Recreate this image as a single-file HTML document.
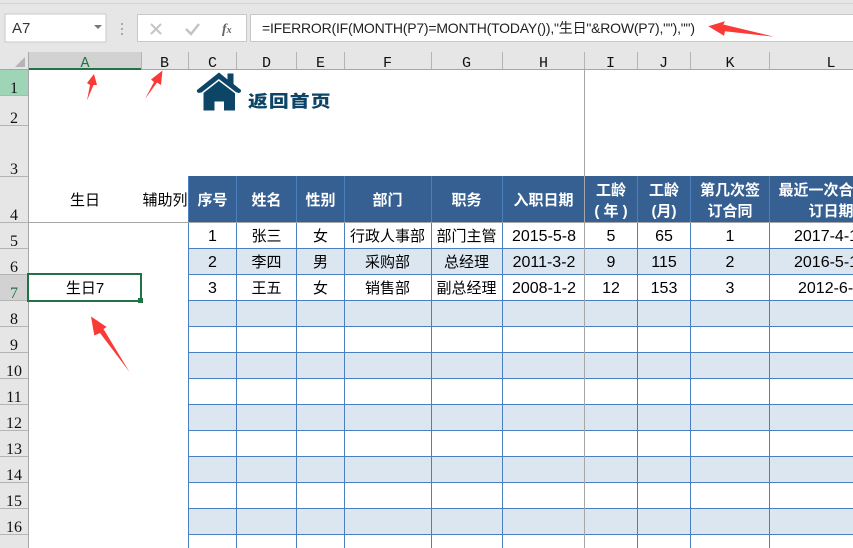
<!DOCTYPE html>
<html lang="zh"><head><meta charset="utf-8"><title>Excel</title>
<style>
html,body{margin:0;padding:0;background:#fff;width:853px;height:548px;overflow:hidden}
svg{display:block;position:absolute;left:0;top:0}
rect{shape-rendering:crispEdges}
.m{font-family:"Liberation Mono",monospace;font-size:15px;fill:#111;text-anchor:middle}
.r{font-family:"Liberation Serif",serif;font-size:16px;fill:#111;text-anchor:middle}
.d{font-family:"Liberation Sans","Noto Sans CJK SC",sans-serif;font-size:15px;fill:#000;text-anchor:middle}
.n{font-family:"Liberation Sans",sans-serif;font-size:16px;fill:#000;text-anchor:middle}
.h{font-family:"Liberation Sans","Noto Sans CJK SC",sans-serif;font-size:15px;font-weight:700;fill:#fff;text-anchor:middle}
</style></head><body>
<svg width="853" height="548" viewBox="0 0 853 548" xmlns="http://www.w3.org/2000/svg">
<rect width="853" height="548" fill="#fff"/>
<!-- ribbon / formula bar -->
<rect width="853" height="52" fill="#e6e6e6"/>
<rect y="3" width="853" height="1" fill="#d4d4d4"/>
<rect x="5" y="14" width="101" height="28" fill="#fff" stroke="#c8c8c8"/>
<text x="12" y="33" font-family="Liberation Sans,sans-serif" font-size="15" fill="#333">A7</text>
<path d="M94 25h8l-4 4z" fill="#777"/>
<rect x="121" y="23" width="2" height="2" fill="#aaa"/><rect x="121" y="28" width="2" height="2" fill="#aaa"/><rect x="121" y="33" width="2" height="2" fill="#aaa"/>
<rect x="137.500" y="14.500" width="109" height="27" fill="#fff" stroke="#c8c8c8"/>
<path d="M151 24l10 10M161 24l-10 10" stroke="#c4c4c4" stroke-width="2" fill="none"/>
<path d="M186 29l5 5 8-10" stroke="#c4c4c4" stroke-width="2.500" fill="none"/>
<text x="222" y="33" font-family="Liberation Serif,serif" font-style="italic" font-weight="700" font-size="14" fill="#666">f<tspan font-size="10">x</tspan></text>
<rect x="250.500" y="14.500" width="610" height="27" fill="#fff" stroke="#c8c8c8"/>
<text x="262" y="33" font-family="Liberation Sans,'Noto Sans CJK SC',sans-serif" font-size="14" fill="#222" textLength="433" lengthAdjust="spacing">=IFERROR(IF(MONTH(P7)=MONTH(TODAY()),"生日"&amp;ROW(P7),""),"")</text>

<!-- column headers -->
<rect y="52" width="853" height="17" fill="#e6e6e6"/>
<rect x="29" y="52" width="112" height="17" fill="#d2d2d2"/>
<rect y="69" width="853" height="1" fill="#a6a6a6"/>
<rect x="29" y="68" width="112" height="2" fill="#217346"/>
<path d="M25 57v10H15z" fill="#b4b4b4"/>
<g fill="#b4b4b4">
<rect x="141" y="52" width="1" height="17"/><rect x="188" y="52" width="1" height="17"/><rect x="236" y="52" width="1" height="17"/><rect x="296" y="52" width="1" height="17"/><rect x="344" y="52" width="1" height="17"/><rect x="431" y="52" width="1" height="17"/><rect x="502" y="52" width="1" height="17"/><rect x="584" y="52" width="1" height="17"/><rect x="637" y="52" width="1" height="17"/><rect x="690" y="52" width="1" height="17"/><rect x="769" y="52" width="1" height="17"/>
</g>
<text class="m" x="85" y="67" style="fill:#217346">A</text><text class="m" x="164.500" y="67">B</text><text class="m" x="212.500" y="67">C</text><text class="m" x="266.500" y="67">D</text><text class="m" x="320.500" y="67">E</text><text class="m" x="387.500" y="67">F</text><text class="m" x="466.500" y="67">G</text><text class="m" x="543.500" y="67">H</text><text class="m" x="610.500" y="67">I</text><text class="m" x="663.500" y="67">J</text><text class="m" x="730" y="67">K</text><text class="m" x="831" y="67">L</text>

<!-- row headers -->
<rect y="70" width="28" height="478" fill="#e6e6e6"/>
<rect y="70" width="28" height="26" fill="#9fd5b7"/>
<rect y="274" width="28" height="26" fill="#d2d2d2"/>
<rect x="28" y="52" width="1" height="496" fill="#a6a6a6"/>
<g fill="#b4b4b4">
<rect y="95" width="28" height="1"/><rect y="125" width="28" height="1"/><rect y="176" width="28" height="1"/><rect y="222" width="28" height="1"/><rect y="248" width="28" height="1"/><rect y="274" width="28" height="1"/><rect y="300" width="28" height="1"/><rect y="326" width="28" height="1"/><rect y="352" width="28" height="1"/><rect y="378" width="28" height="1"/><rect y="404" width="28" height="1"/><rect y="430" width="28" height="1"/><rect y="456" width="28" height="1"/><rect y="482" width="28" height="1"/><rect y="508" width="28" height="1"/><rect y="534" width="28" height="1"/>
</g>
<text class="r" x="14" y="93">1</text><text class="r" x="14" y="123">2</text><text class="r" x="14" y="174">3</text><text class="r" x="14" y="220">4</text><text class="r" x="14" y="246">5</text><text class="r" x="14" y="272">6</text><text class="r" x="14" y="298" style="fill:#217346">7</text><text class="r" x="14" y="324">8</text><text class="r" x="14" y="350">9</text><text class="r" x="14" y="376">10</text><text class="r" x="14" y="402">11</text><text class="r" x="14" y="428">12</text><text class="r" x="14" y="454">13</text><text class="r" x="14" y="480">14</text><text class="r" x="14" y="506">15</text><text class="r" x="14" y="532">16</text>

<!-- table fills -->
<rect x="188" y="176" width="665" height="46" fill="#366092"/>
<g fill="#dce6f1">
<rect x="188" y="248" width="665" height="26"/><rect x="188" y="300" width="665" height="26"/><rect x="188" y="352" width="665" height="26"/><rect x="188" y="404" width="665" height="26"/><rect x="188" y="456" width="665" height="26"/><rect x="188" y="508" width="665" height="26"/>
</g>
<!-- table grid -->
<g fill="#4a7fc1">
<rect x="188" y="176" width="1" height="372"/><rect x="236" y="176" width="1" height="372"/><rect x="296" y="176" width="1" height="372"/><rect x="344" y="176" width="1" height="372"/><rect x="431" y="176" width="1" height="372"/><rect x="502" y="176" width="1" height="372"/><rect x="637" y="176" width="1" height="372"/><rect x="690" y="176" width="1" height="372"/><rect x="769" y="176" width="1" height="372"/>
<rect x="188" y="248" width="665" height="1"/><rect x="188" y="274" width="665" height="1"/><rect x="188" y="300" width="665" height="1"/><rect x="188" y="326" width="665" height="1"/><rect x="188" y="352" width="665" height="1"/><rect x="188" y="378" width="665" height="1"/><rect x="188" y="404" width="665" height="1"/><rect x="188" y="430" width="665" height="1"/><rect x="188" y="456" width="665" height="1"/><rect x="188" y="482" width="665" height="1"/><rect x="188" y="508" width="665" height="1"/><rect x="188" y="534" width="665" height="1"/>
</g>
<!-- freeze panes -->
<rect x="29" y="222" width="824" height="1" fill="#a6a6a6"/>
<rect x="584" y="70" width="1" height="478" fill="#a6a6a6"/>

<!-- logo -->
<path d="M219 72.500L227.500 79.500V73.500H233.500V84L241 90Q241.500 92 239 93L235 92V110.500H224V101.500H214.500V110.500H203.500V92L199 93Q196 92 197 90Z" fill="#0d4567"/>
<path d="M201.500 93.500L218.800 80L236.500 93.500" fill="none" stroke="#fff" stroke-width="1.500"/>
<text transform="translate(248,107) scale(1.1,0.92)" font-family="Noto Sans CJK SC,sans-serif" font-weight="900" font-size="18" letter-spacing="1" fill="#0d4567">返回首页</text>

<!-- left labels -->
<text class="d" x="85" y="205">生日</text>
<text class="d" x="165" y="205">辅助列</text>
<text class="d" x="85" y="293">生日7</text>
<rect x="28" y="274" width="113" height="27" fill="none" stroke="#217346" stroke-width="2"/>
<rect x="138" y="298" width="6" height="6" fill="#fff"/>
<rect x="138" y="298" width="5" height="5" fill="#217346"/>

<!-- table header -->
<text class="h" x="212.500" y="205">序号</text><text class="h" x="266.500" y="205">姓名</text><text class="h" x="320.500" y="205">性别</text><text class="h" x="387.500" y="205">部门</text><text class="h" x="466.500" y="205">职务</text><text class="h" x="543.500" y="205">入职日期</text>
<text class="h" x="611" y="195">工龄</text><text class="h" x="611" y="216">( 年 )</text>
<text class="h" x="664" y="195">工龄</text><text class="h" x="664" y="216">(月)</text>
<text class="h" x="730" y="195">第几次签</text><text class="h" x="730" y="216">订合同</text>
<text class="h" x="831" y="195">最近一次合同签</text><text class="h" x="831" y="216">订日期</text>

<!-- data rows -->
<text class="n" x="212.500" y="241">1</text><text class="d" x="266.500" y="241">张三</text><text class="d" x="320.500" y="241">女</text><text class="d" x="387.500" y="241">行政人事部</text><text class="d" x="466.500" y="241">部门主管</text><text class="n" x="544" y="241">2015-5-8</text><text class="n" x="611" y="241">5</text><text class="n" x="664" y="241">65</text><text class="n" x="730" y="241">1</text><text class="n" x="794" y="241" style="text-anchor:start">2017-4-1</text>
<text class="n" x="212.500" y="267">2</text><text class="d" x="266.500" y="267">李四</text><text class="d" x="320.500" y="267">男</text><text class="d" x="387.500" y="267">采购部</text><text class="d" x="466.500" y="267">总经理</text><text class="n" x="544" y="267">2011-3-2</text><text class="n" x="611" y="267">9</text><text class="n" x="664" y="267">115</text><text class="n" x="730" y="267">2</text><text class="n" x="794" y="267" style="text-anchor:start">2016-5-1</text>
<text class="n" x="212.500" y="293">3</text><text class="d" x="266.500" y="293">王五</text><text class="d" x="320.500" y="293">女</text><text class="d" x="387.500" y="293">销售部</text><text class="d" x="466.500" y="293">副总经理</text><text class="n" x="544" y="293">2008-1-2</text><text class="n" x="611" y="293">12</text><text class="n" x="664" y="293">153</text><text class="n" x="730" y="293">3</text><text class="n" x="798" y="293" style="text-anchor:start">2012-6-1</text>

<!-- red arrows -->
<g fill="#fb3a38">
<path d="M87 100.500L90 85L87 83L94 74L97 85L93.500 85Z"/>
<path d="M145 99L154 82L151 79.500L162.500 70.500L161 85L157 82.500Z"/>
<path d="M91 316.500L106.700 327L103.500 329L129.500 372L100 333L94.300 335.500Z"/>
<path d="M708.300 26.300L725 21.300L723.300 24.500L774 36.700L725 31.300L724 35.700Z"/>
</g>
</svg>
</body></html>
